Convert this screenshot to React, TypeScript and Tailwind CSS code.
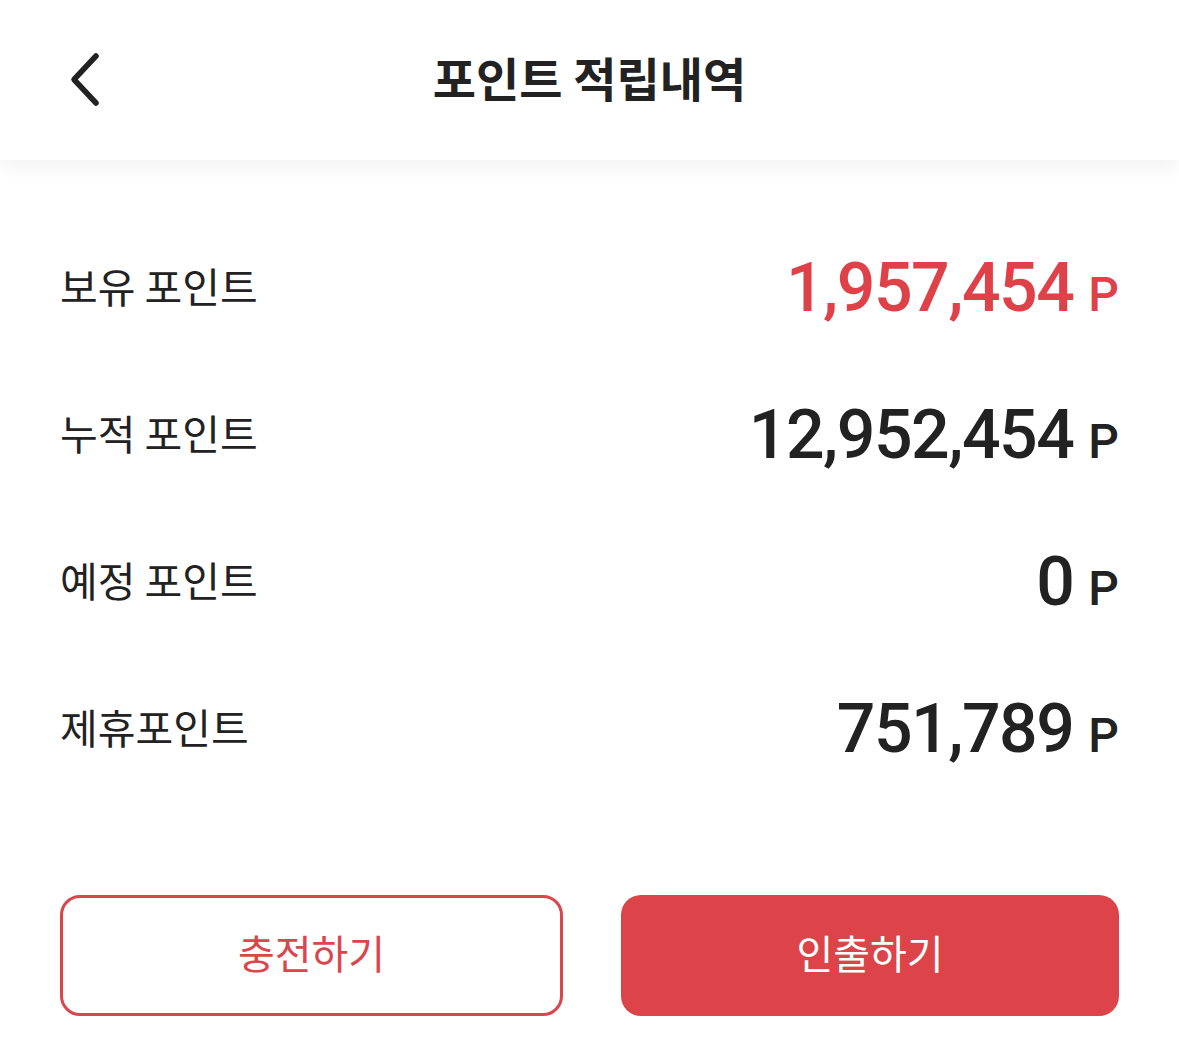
// 포인트 적립내역 — point summary screen

interface PointRow {
  label: string;
  value: string;
  highlight?: boolean;
}

const ROWS: PointRow[] = [
  { label: '보유 포인트', value: '1,957,454', highlight: true },
  { label: '누적 포인트', value: '12,952,454' },
  { label: '예정 포인트', value: '0' },
  { label: '제휴포인트', value: '751,789' },
];

const KR = "font-['Noto_Sans_CJK_KR','Noto_Sans',sans-serif]";

function BackIcon() {
  return (
    <svg width="40" height="60" viewBox="0 0 40 60" fill="none" className="block">
      <polyline
        points="32,8 10,31.5 32,55"
        stroke="#222"
        strokeWidth="5.5"
        strokeLinecap="round"
        strokeLinejoin="round"
      />
    </svg>
  );
}

export default function App() {
  return (
    <div className={`min-h-screen w-full bg-white ${KR} text-[#222]`}>
      <header className="relative z-10 flex h-[160px] items-center justify-center bg-white pb-[8px] shadow-[0_8px_18px_rgba(0,0,0,0.05)]">
        <button className="absolute left-[64px] top-[48px]" aria-label="뒤로">
          <BackIcon />
        </button>
        <h1 className="text-[47px] font-bold leading-none">포인트 적립내역</h1>
      </header>

      <main className="px-[60px] pt-[54px]">
        <div className="flex flex-col">
          {ROWS.map((r) => (
            <div key={r.label} className="flex h-[147px] items-center justify-between">
              <span className="pb-[5px] text-[41px] leading-none">{r.label}</span>
              <span
                className={`flex items-baseline font-['Roboto',sans-serif] font-medium leading-none ${
                  r.highlight ? 'text-[#df4149]' : 'text-[#222]'
                }`}
              >
                <span className="text-[68px] tracking-[-1.5px]">{r.value}</span>
                <span className="ml-[15px] text-[48px]">P</span>
              </span>
            </div>
          ))}
        </div>

        <div className="mt-[93px] flex gap-[58px]">
          <button className="flex h-[121px] w-[503px] items-center justify-center rounded-[20px] border-[3px] border-[#d9474d] bg-white pb-[8px] text-[40px] text-[#d9474d]">
            충전하기
          </button>
          <button className="flex h-[121px] flex-1 items-center justify-center rounded-[20px] bg-[#dc4449] pb-[8px] text-[40px] text-white">
            인출하기
          </button>
        </div>
      </main>
    </div>
  );
}
